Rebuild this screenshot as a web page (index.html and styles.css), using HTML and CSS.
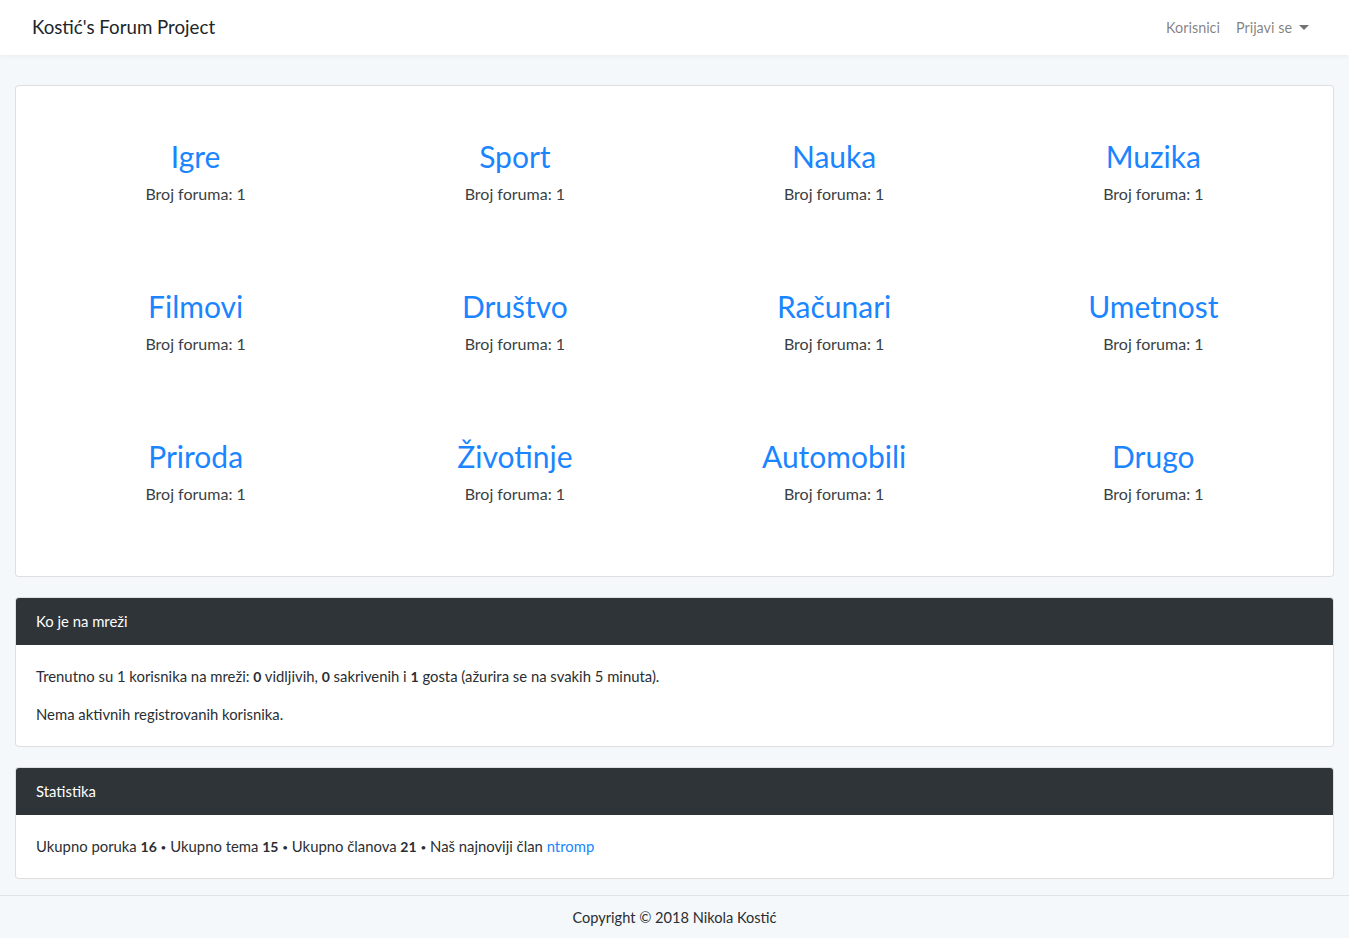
FILE: index.html
```html
<!DOCTYPE html>
<html lang="sr">
<head>
<meta charset="utf-8">
<title>Kostić's Forum Project</title>
<link rel="stylesheet" href="styles.css">
</head>
<body>
<nav class="navbar">
  <a class="brand" href="#">Kostić's Forum Project</a>
  <ul class="nav-links">
    <li><a href="#">Korisnici</a></li>
    <li><a href="#" class="dropdown">Prijavi se <span class="caret"></span></a></li>
  </ul>
</nav>

<main class="container">
  <section class="card">
    <div class="card-body categories">
      <div class="cat"><a href="#">Igre</a><p>Broj foruma: 1</p></div>
      <div class="cat"><a href="#">Sport</a><p>Broj foruma: 1</p></div>
      <div class="cat"><a href="#">Nauka</a><p>Broj foruma: 1</p></div>
      <div class="cat"><a href="#">Muzika</a><p>Broj foruma: 1</p></div>
      <div class="cat"><a href="#">Filmovi</a><p>Broj foruma: 1</p></div>
      <div class="cat"><a href="#">Društvo</a><p>Broj foruma: 1</p></div>
      <div class="cat"><a href="#">Računari</a><p>Broj foruma: 1</p></div>
      <div class="cat"><a href="#">Umetnost</a><p>Broj foruma: 1</p></div>
      <div class="cat"><a href="#">Priroda</a><p>Broj foruma: 1</p></div>
      <div class="cat"><a href="#">Životinje</a><p>Broj foruma: 1</p></div>
      <div class="cat"><a href="#">Automobili</a><p>Broj foruma: 1</p></div>
      <div class="cat"><a href="#">Drugo</a><p>Broj foruma: 1</p></div>
    </div>
  </section>

  <section class="card">
    <div class="card-header">Ko je na mreži</div>
    <div class="card-body">
      <p>Trenutno su 1 korisnika na mreži: <b>0</b> vidljivih, <b>0</b> sakrivenih i <b>1</b> gosta (ažurira se na svakih 5 minuta).</p>
      <p class="last">Nema aktivnih registrovanih korisnika.</p>
    </div>
  </section>

  <section class="card">
    <div class="card-header">Statistika</div>
    <div class="card-body">
      <p class="last">Ukupno poruka <b>16</b> <span class="sep">•</span> Ukupno tema <b>15</b> <span class="sep">•</span> Ukupno članova <b>21</b> <span class="sep">•</span> Naš najnoviji član <a href="#">ntromp</a></p>
    </div>
  </section>
</main>

<footer class="footer">Copyright © 2018 Nikola Kostić</footer>
</body>
</html>
```

FILE: styles.css
```css
* { box-sizing: border-box; }
html, body { margin: 0; padding: 0; }
body {
  font-family: "Lato", "Open Sans", sans-serif;
  font-size: 14.85px;
  line-height: 23px;
  color: #2a2e33;
  background: #f5f8fa;
}
a { color: #1a85ff; text-decoration: none; }
b { font-weight: 700; font-size: 14px; line-height: 0; }
.sep { font-size: 10px; line-height: 0; position: relative; top: -1px; }

.navbar {
  height: 55px;
  background: #fff;
  box-shadow: 0 2px 4px rgba(0,0,0,.04);
  display: flex;
  align-items: center;
  justify-content: space-between;
  padding: 0 32px;
}
.brand {
  color: #212529;
  font-size: 18.7px;
}
.nav-links {
  list-style: none;
  margin: 0;
  padding: 0;
  display: flex;
  gap: 16px;
  margin-right: 8px;
}
.nav-links a {
  color: rgba(0,0,0,.5);
  font-size: 14.4px;
  display: flex;
  align-items: center;
}
.caret {
  display: inline-block;
  width: 0; height: 0;
  margin-left: 7px;
  border-top: 5px solid rgba(0,0,0,.55);
  border-left: 5px solid transparent;
  border-right: 5px solid transparent;
}

.container {
  padding: 30px 15px 16px;
}
.card {
  background: #fff;
  border: 1px solid rgba(0,0,0,.125);
  border-radius: 4px;
  margin-bottom: 20px;
  overflow: hidden;
}
.card:last-child { margin-bottom: 0; }
.card-header {
  background: #2e3438;
  color: #fff;
  padding: 12px 20px;
}
.card-body { padding: 20px; }
.card-body p { margin: 0 0 15px; }
.card-body p.last { margin-bottom: 0; }

.categories {
  display: grid;
  grid-template-columns: repeat(4, 1fr);
}
.cat {
  text-align: center;
  padding: 30px 0;
  height: 150px;
}
.cat a {
  display: block;
  font-size: 30px;
  line-height: 38px;
  margin-top: 1px;
  margin-bottom: 7px;
}
.cat p {
  margin: 0;
  font-size: 16px;
  line-height: 24px;
  color: #3a3f44;
}

.footer {
  border-top: 1px solid #dfe3e6;
  text-align: center;
  padding: 10px 0 11px;
  font-size: 14.6px;
}
```
